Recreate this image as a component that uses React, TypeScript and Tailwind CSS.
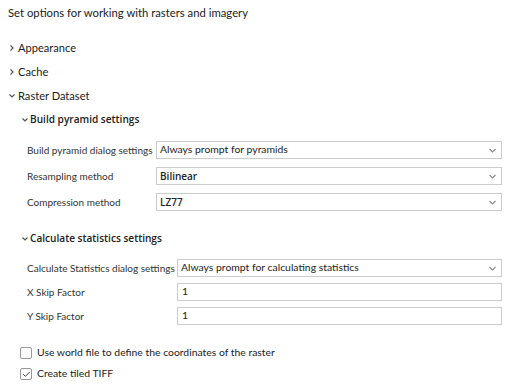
import { Check } from 'lucide-react';

const font = { fontFamily: 'Lato, "Segoe UI", "Open Sans", sans-serif' };
const semi = { fontFamily: '"Open Sans", Lato, sans-serif' };

function Chev({ open }: { open?: boolean }) {
  return (
    <svg width="8" height="8" viewBox="0 0 8 8" className="shrink-0 text-[#555]">
      {open ? (
        <polyline points="1.5,2.5 4,5 6.5,2.5" fill="none" stroke="currentColor" strokeWidth="1.2" />
      ) : (
        <polyline points="2.5,1.5 5,4 2.5,6.5" fill="none" stroke="currentColor" strokeWidth="1.2" />
      )}
    </svg>
  );
}

function Select({ value, strong }: { value: string; strong?: boolean }) {
  return (
    <div className="flex-1 h-[18px] border border-[#cccccc] bg-white flex items-center justify-between pl-[3px] pr-[5px] text-[10.4px] text-[#222]">
      {strong ? (
        <span style={semi} className="font-semibold text-[10px]">{value}</span>
      ) : (
        <span>{value}</span>
      )}
      <svg width="7" height="5" viewBox="0 0 7 5" className="text-[#888]">
        <polyline points="0.5,1 3.5,4 6.5,1" fill="none" stroke="currentColor" strokeWidth="1.1" />
      </svg>
    </div>
  );
}

function Input({ value }: { value: string }) {
  return (
    <div className="flex-1 h-[18px] border border-[#cccccc] bg-white flex items-center pl-[4px] text-[10.4px] text-[#222]">
      {value}
    </div>
  );
}

function Row({ label, w, children }: { label: string; w: string; children: React.ReactNode }) {
  return (
    <div className="flex items-center h-[18px]">
      <div className={`${w} shrink-0 whitespace-nowrap text-[10px] text-[#333]`}>{label}</div>
      {children}
    </div>
  );
}

export default function App() {
  return (
    <div style={font} className="w-[518px] h-[385px] bg-white text-[#333] overflow-hidden pl-[8px] pr-[16px]">
      <div className="pt-[5px] text-[11.3px] text-[#222] h-[24px] whitespace-nowrap">Set options for working with rasters and imagery</div>

      <div className="mt-[15px] flex flex-col gap-[6px] text-[11.1px] text-[#222]">
        <div className="flex items-center h-[18px] gap-[2px]">
          <Chev />Appearance
        </div>
        <div className="flex items-center h-[18px] gap-[2px]">
          <Chev />Cache
        </div>
        <div className="flex items-center h-[18px] gap-[2px]">
          <Chev open />Raster Dataset
        </div>
      </div>

      <div className="pl-[13px] mt-[6px]">
        <div style={semi} className="flex items-center h-[18px] gap-[1px] text-[10.1px] font-semibold text-[#222]">
          <Chev open />Build pyramid settings
        </div>
        <div className="pl-[6px] mt-[12px] flex flex-col gap-[8px]">
          <Row label="Build pyramid dialog settings" w="w-[129px]"><Select value="Always prompt for pyramids" /></Row>
          <Row label="Resampling method" w="w-[129px]"><Select value="Bilinear" strong /></Row>
          <Row label="Compression method" w="w-[129px]"><Select value="LZ77" strong /></Row>
        </div>

        <div style={semi} className="flex items-center h-[18px] gap-[1px] text-[10.1px] font-semibold text-[#222] mt-[19px]">
          <Chev open />Calculate statistics settings
        </div>
        <div className="pl-[6px] mt-[11px] flex flex-col gap-[6px]">
          <Row label="Calculate Statistics dialog settings" w="w-[150px]"><Select value="Always prompt for calculating statistics" /></Row>
          <Row label="X Skip Factor" w="w-[150px]"><Input value="1" /></Row>
          <Row label="Y Skip Factor" w="w-[150px]"><Input value="1" /></Row>
        </div>
      </div>

      <div className="pl-[12px] mt-[22px] flex flex-col gap-[9px] text-[10.4px] text-[#222]">
        <div className="flex items-center h-[12px]">
          <div className="w-[12px] h-[12px] border border-[#999] rounded-[2px] mr-[5px] bg-white" />
          Use world file to define the coordinates of the raster
        </div>
        <div className="flex items-center h-[12px]">
          <div className="w-[12px] h-[12px] border border-[#999] rounded-[2px] mr-[5px] bg-white flex items-center justify-center">
            <Check size={9} strokeWidth={2.5} className="text-[#333]" />
          </div>
          Create tiled TIFF
        </div>
      </div>
    </div>
  );
}
